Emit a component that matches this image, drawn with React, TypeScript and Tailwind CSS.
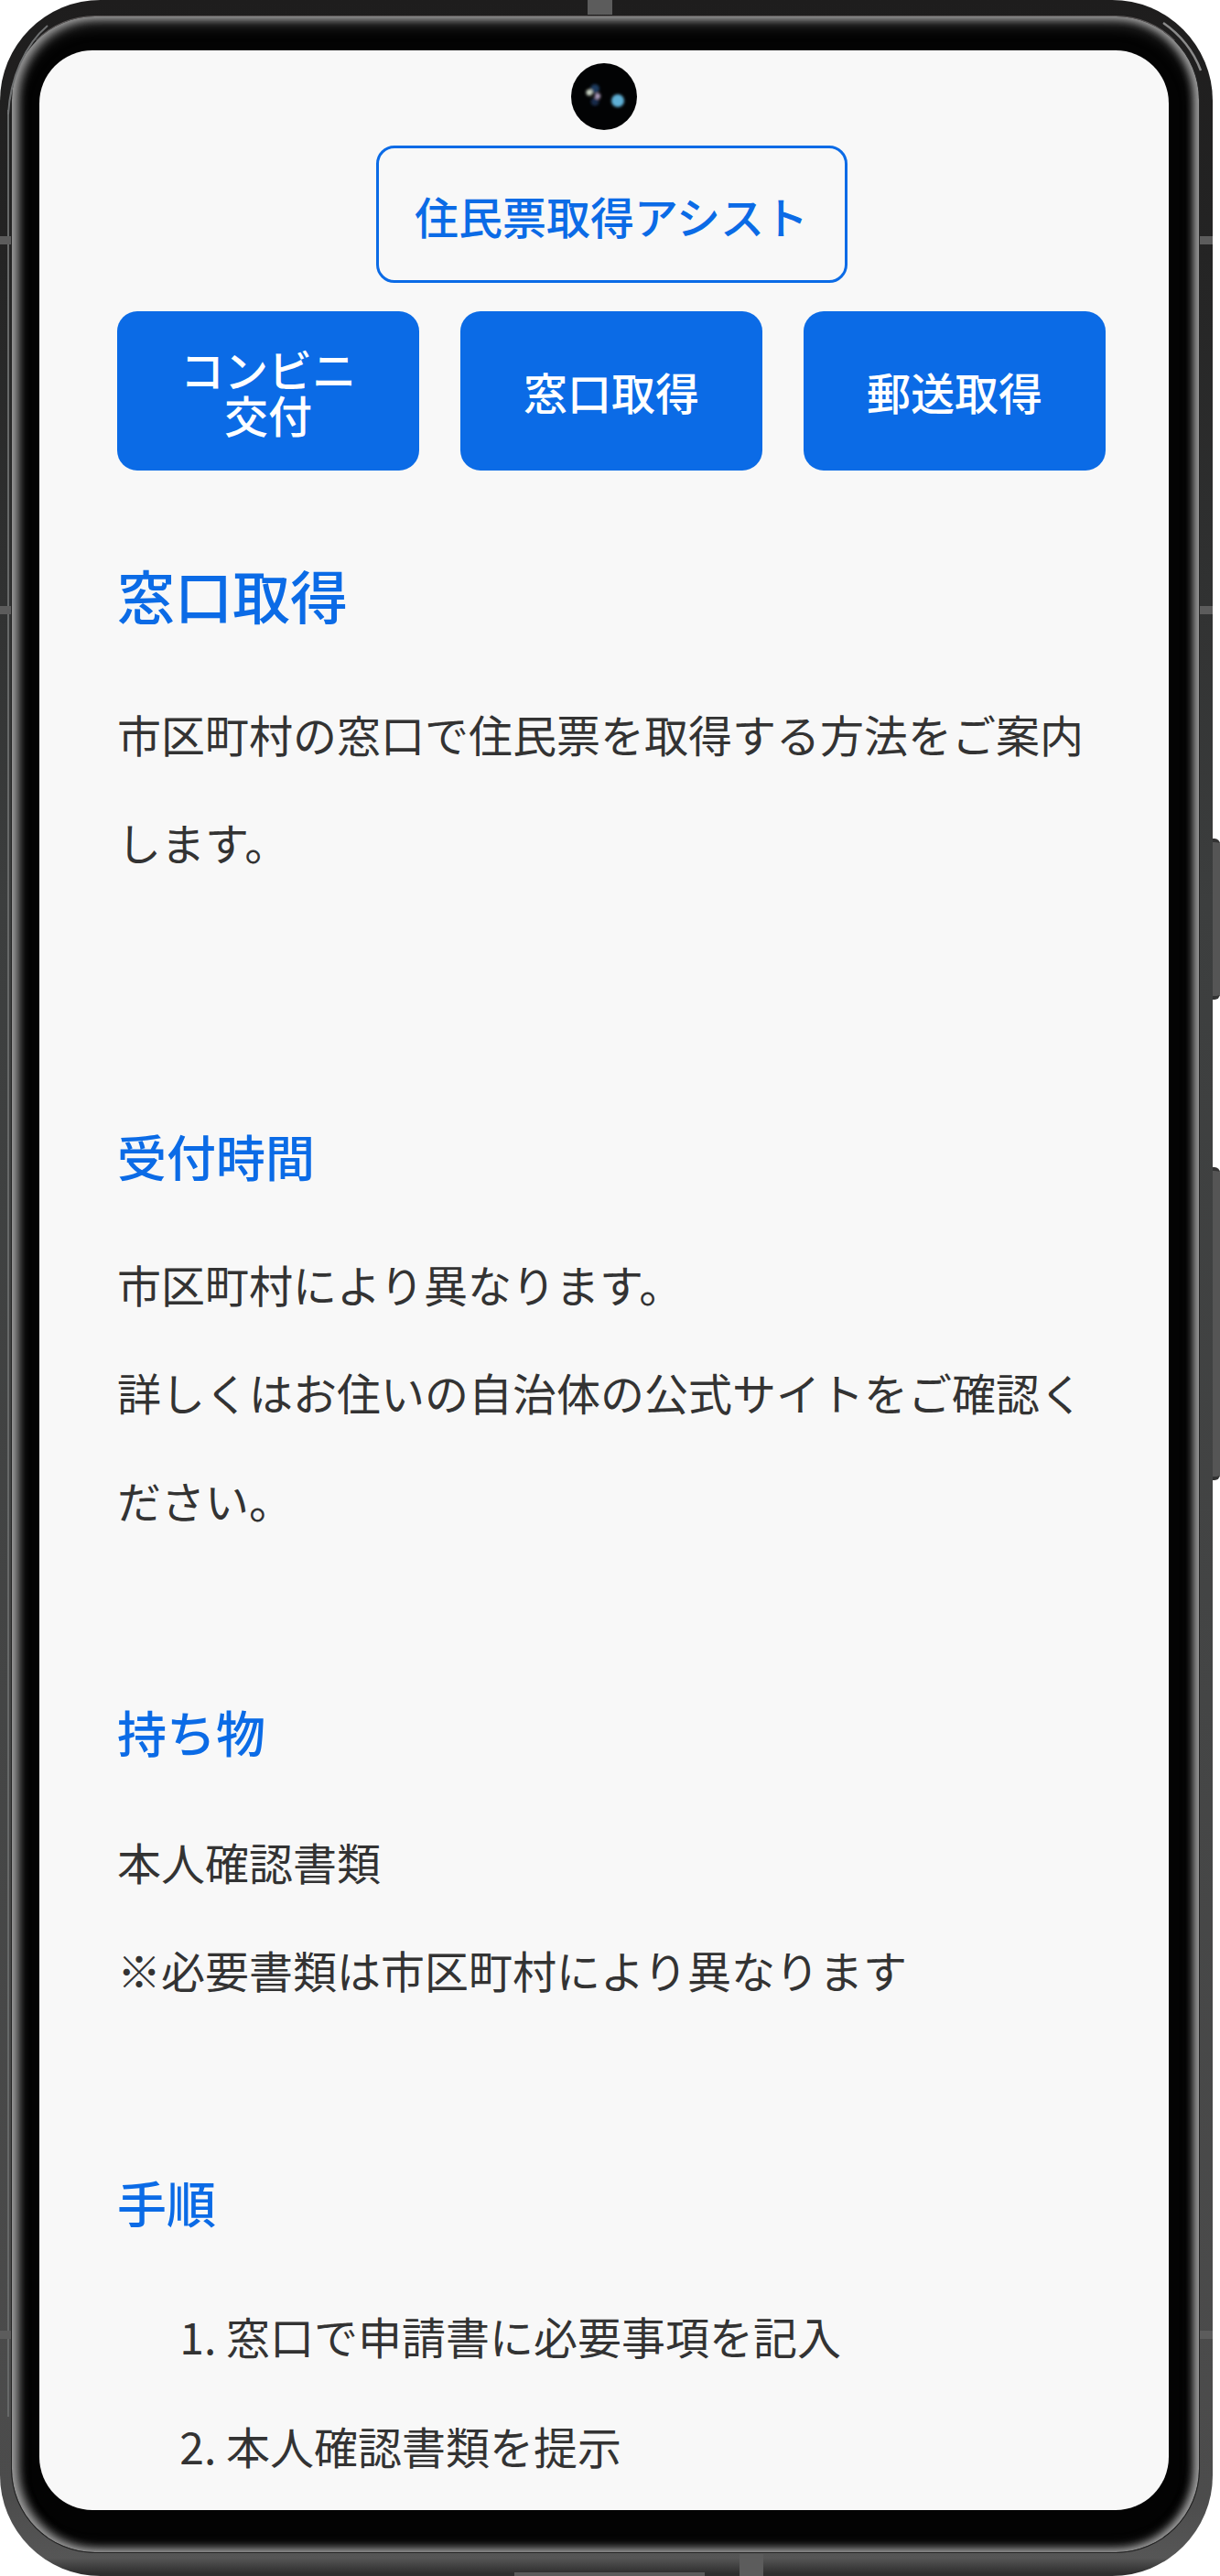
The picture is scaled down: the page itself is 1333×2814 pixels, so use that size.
const bodyText = "text-[48px] leading-[118px] text-[#333333]";
const h3 = "text-[54px] font-medium leading-[80px] text-[#0b6be6]";
const modeButton = "flex h-[174px] items-center justify-center rounded-[22px] bg-[#0b6be6] text-center text-[48px] font-medium leading-[50px] text-white";

function CameraHole() {
  return (
    <svg className="absolute left-[581px] top-[14px]" width="72" height="73" viewBox="0 0 72 73">
      <defs>
        <filter id="glow" x="-100%" y="-100%" width="300%" height="300%">
          <feGaussianBlur stdDeviation="1.6" />
        </filter>
      </defs>
      <ellipse cx="36" cy="36.5" rx="36" ry="36.5" fill="#020304" />
      <g filter="url(#glow)">
        <circle cx="26" cy="28" r="5" fill="#1c3a5e" />
        <circle cx="26" cy="42" r="4.5" fill="#142a48" />
        <circle cx="20" cy="32" r="3.6" fill="#c5cfc0" />
        <circle cx="29" cy="36" r="3.2" fill="#a998b8" />
        <circle cx="51" cy="41" r="7" fill="#5fb0d6" />
      </g>
    </svg>
  );
}

function BezelHighlights() {
  return (
    <svg className="absolute left-0 top-0 pointer-events-none" width="1333" height="2814" viewBox="0 0 1333 2814" fill="none">
      <path d="M9 125 C 11 85, 28 48, 52 28" stroke="#6f7172" strokeWidth="2" />
      <path d="M1271 25 C 1290 38, 1304 56, 1312 77" stroke="#8a8a8a" strokeWidth="2.5" />
    </svg>
  );
}

// metal bands cut through the phone's rim
function RimBands() {
  const bands = [
    "left-0 top-[258px] w-[12px] h-[9px]",
    "left-[1311px] top-[258px] w-[14px] h-[9px]",
    "left-0 top-[662px] w-[12px] h-[9px]",
    "left-[1311px] top-[662px] w-[14px] h-[9px]",
    "left-0 top-[2546px] w-[12px] h-[9px]",
    "left-[1311px] top-[2546px] w-[14px] h-[9px]",
    "left-[642px] top-0 w-[27px] h-[16px]",
    "left-[808px] top-[2790px] w-[26px] h-[24px]",
    "left-[562px] top-[2810px] w-[208px] h-[4px]",
  ];
  return (
    <>
      {bands.map((b) => (
        <div key={b} className={`absolute bg-[#5c5c5c] ${b}`} />
      ))}
    </>
  );
}

export default function App() {
  return (
    <div className="relative w-[1333px] h-[2814px] bg-white overflow-hidden font-['Noto_Sans_CJK_JP','Noto_Sans',sans-serif]">
      {/* side keys */}
      <div className="absolute left-[1325px] top-[916px] w-[8px] h-[176px] rounded-r-[6px] bg-[#555555] border-y-[4px] border-[#333333]" />
      <div className="absolute left-[1325px] top-[1275px] w-[8px] h-[342px] rounded-r-[6px] bg-[#555555] border-y-[4px] border-[#333333]" />

      {/* phone body */}
      <div className="flex w-[1325px] h-[2814px] rounded-[110px] bg-[linear-gradient(180deg,#1e1d1d_0%,#242424_10%,#3c3e3e_35%,#4c4c4c_97%,#565656_99.3%,#2e2e2e_99.9%)] pl-[12px] pt-[17px] pr-[14px] pb-[25px]">
        <div className="flex flex-1 rounded-[92px] border border-[#262626] border-t-[#5c5858] bg-[#030303] pl-[30px] pt-[37px] pr-[33px] pb-[46px] shadow-[inset_6px_0_12px_0_#a0a0a0,inset_-5px_0_10px_0_#a0a0a0,inset_0_6px_18px_0_#4c4c4c,inset_0_-4px_14px_0_#555555]">
          {/* screen */}
          <div className="relative flex-1 overflow-hidden rounded-[58px] bg-[#f8f8f8] pl-[85px] pr-[69px] pt-[104px]">
            <CameraHole />

            <div className="mx-auto flex w-[515px] h-[150px] items-center justify-center rounded-[20px] border-[3px] border-[#0b6be6] pt-[2px] text-[48px] font-medium text-[#0b6be6]">
              住民票取得アシスト
            </div>

            <div className="mt-[31px] grid grid-cols-3 gap-[45px]">
              <div className={modeButton}>
                コンビニ
                <br />
                交付
              </div>
              <div className={modeButton}>窓口取得</div>
              <div className={modeButton}>郵送取得</div>
            </div>

            <h2 className="mt-[90px] text-[63px] font-medium leading-[90px] text-[#0b6be6]">窓口取得</h2>
            <p className={`mt-[48px] w-[1070px] ${bodyText}`}>市区町村の窓口で住民票を取得する方法をご案内します。</p>

            <h3 className={`mt-[245px] ${h3}`}>受付時間</h3>
            <p className={`mt-[40px] w-[1070px] ${bodyText}`}>
              市区町村により異なります。
              <br />
              詳しくはお住いの自治体の公式サイトをご確認ください。
            </p>

            <h3 className={`mt-[155px] ${h3}`}>持ち物</h3>
            <p className={`mt-[42px] w-[1070px] ${bodyText}`}>
              本人確認書類
              <br />
              ※必要書類は市区町村により異なります
            </p>

            <h3 className={`mt-[156px] ${h3}`}>手順</h3>
            <ol className={`mt-[46px] list-decimal pl-[119px] ${bodyText}`}>
              <li className="mb-[2px]">窓口で申請書に必要事項を記入</li>
              <li>本人確認書類を提示</li>
            </ol>
          </div>
        </div>
      </div>

      {/* thin highlight on the left rim */}
      <div className="absolute left-[8px] top-[120px] w-[2px] h-[2520px] bg-[#666868]" />
      <RimBands />
      <BezelHighlights />
    </div>
  );
}
